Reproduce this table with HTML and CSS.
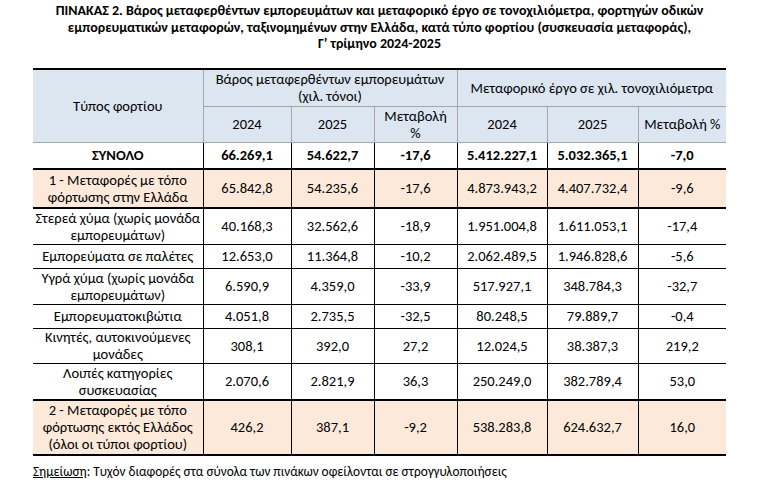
FILE: index.html
```html
<!DOCTYPE html>
<html lang="el">
<head>
<meta charset="utf-8">
<title>Πίνακας 2</title>
<link rel="stylesheet" href="styles.css">
</head>
<body>
<div class="page">
  <h1 class="title">ΠΙΝΑΚΑΣ 2. Βάρος μεταφερθέντων εμπορευμάτων και μεταφορικό έργο σε τονοχιλιόμετρα, φορτηγών οδικών εμπορευματικών μεταφορών, ταξινομημένων στην Ελλάδα, κατά τύπο φορτίου (συσκευασία μεταφοράς),<br>Γ’ τρίμηνο 2024-2025</h1>
  <table class="data">
    <colgroup>
      <col class="c-type"><col class="c-a"><col class="c-b"><col class="c-c"><col class="c-d"><col class="c-e"><col class="c-f">
    </colgroup>
    <thead>
      <tr class="h1">
        <th rowspan="2" class="first">Τύπος φορτίου</th>
        <th colspan="3">Βάρος μεταφερθέντων εμπορευμάτων<br>(χιλ. τόνοι)</th>
        <th colspan="3" class="last">Μεταφορικό έργο σε χιλ. τονοχιλιόμετρα</th>
      </tr>
      <tr class="h2">
        <th>2024</th><th>2025</th><th>Μεταβολή<br>%</th>
        <th>2024</th><th>2025</th><th class="last">Μεταβολή %</th>
      </tr>
    </thead>
    <tbody>
      <tr class="total r27">
        <td>ΣΥΝΟΛΟ</td><td>66.269,1</td><td>54.622,7</td><td>-17,6</td><td>5.412.227,1</td><td>5.032.365,1</td><td>-7,0</td>
      </tr>
      <tr class="group r39">
        <td>1 - Μεταφορές με τόπο<br>φόρτωσης στην Ελλάδα</td><td>65.842,8</td><td>54.235,6</td><td>-17,6</td><td>4.873.943,2</td><td>4.407.732,4</td><td>-9,6</td>
      </tr>
      <tr class="r36">
        <td>Στερεά χύμα (χωρίς μονάδα<br>εμπορευμάτων)</td><td>40.168,3</td><td>32.562,6</td><td>-18,9</td><td>1.951.004,8</td><td>1.611.053,1</td><td>-17,4</td>
      </tr>
      <tr class="r24">
        <td>Εμπορεύματα σε παλέτες</td><td>12.653,0</td><td>11.364,8</td><td>-10,2</td><td>2.062.489,5</td><td>1.946.828,6</td><td>-5,6</td>
      </tr>
      <tr class="r36">
        <td>Υγρά χύμα (χωρίς μονάδα<br>εμπορευμάτων)</td><td>6.590,9</td><td>4.359,0</td><td>-33,9</td><td>517.927,1</td><td>348.784,3</td><td>-32,7</td>
      </tr>
      <tr class="r24">
        <td>Εμπορευματοκιβώτια</td><td>4.051,8</td><td>2.735,5</td><td>-32,5</td><td>80.248,5</td><td>79.889,7</td><td>-0,4</td>
      </tr>
      <tr class="r35">
        <td>Κινητές, αυτοκινούμενες<br>μονάδες</td><td>308,1</td><td>392,0</td><td>27,2</td><td>12.024,5</td><td>38.387,3</td><td>219,2</td>
      </tr>
      <tr class="r36 before-group">
        <td>Λοιπές κατηγορίες<br>συσκευασίας</td><td>2.070,6</td><td>2.821,9</td><td>36,3</td><td>250.249,0</td><td>382.789,4</td><td>53,0</td>
      </tr>
      <tr class="group r55 lastrow">
        <td>2 - Μεταφορές με τόπο<br>φόρτωσης εκτός Ελλάδος<br>(όλοι οι τύποι φορτίου)</td><td>426,2</td><td>387,1</td><td>-9,2</td><td>538.283,8</td><td>624.632,7</td><td>16,0</td>
      </tr>
    </tbody>
  </table>
  <p class="note"><span class="u">Σημείωση</span>: Τυχόν διαφορές στα σύνολα των πινάκων οφείλονται σε στρογγυλοποιήσεις</p>
</div>
</body>
</html>
```

FILE: styles.css
```css
html, body {
  margin: 0;
  padding: 0;
  background: #ffffff;
}
body {
  font-family: Carlito, "Liberation Sans Narrow", Lato, sans-serif;
  color: #000000;
}
.page {
  width: 693px;
  margin-left: 33px;
  padding-top: 3px;
}
.title {
  margin: 0;
  font-size: 14px;
  line-height: 16.5px;
  font-weight: bold;
  text-align: center;
  height: 65px;
}
.data {
  border-collapse: collapse;
  table-layout: fixed;
  width: 693px;
  font-size: 14.5px;
  line-height: 17px;
  text-align: center;
}
.c-type { width: 170px; }
.c-a { width: 88px; }
.c-b { width: 83px; }
.c-c { width: 83px; }
.c-d { width: 90px; }
.c-e { width: 91px; }
.c-f { width: 88px; }
.data th, .data td {
  padding: 0;
  vertical-align: middle;
}
.data thead th {
  background: #dce6f1;
  font-weight: normal;
  border: 1px solid #a6a6a6;
}
.data thead tr.h1 th {
  border-top: 2px solid #000;
  height: 36px;
}
.data thead tr.h2 th {
  height: 35px;
}
.data thead th.first { border-left: none; }
.data thead th.last { border-right: none; }
.data thead tr th { border-bottom-color: #a6a6a6; }
.data tbody td {
  border: 1px solid #000;
}
.data tbody td:first-child { border-left: none; }
.data tbody td:last-child { border-right: none; }
.data tbody tr.total td {
  font-weight: bold;
  border-top: 1px solid #000;
  border-bottom: 2px solid #000;
}
.data tbody tr.group td {
  background: #fde9d9;
  border-bottom: 2px solid #000;
}
.data tbody tr.before-group td { border-bottom: 2px solid #000; }
.data tbody tr.lastrow td { border-bottom: 2px solid #000; }
.r24 td { height: 23px; }
.r27 td { height: 25px; }
.r35 td { height: 34px; }
.r36 td { height: 35px; }
.r39 td { height: 37px; }
.r55 td { height: 53px; }
.note {
  margin: 8px 0 0 0;
  font-size: 13.3px;
  line-height: 16px;
}
.u { text-decoration: underline; }
```
